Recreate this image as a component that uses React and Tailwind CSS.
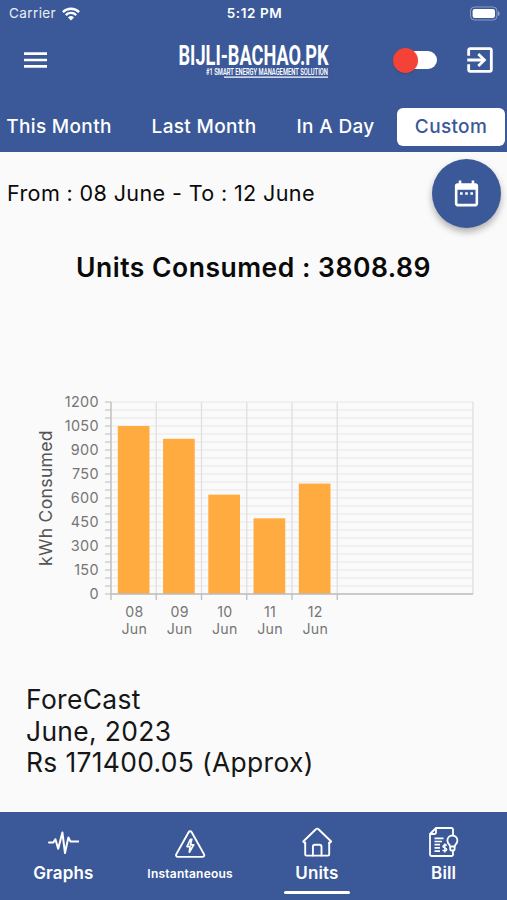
import { useState } from 'react';

const tabs = [
  { label: 'This Month', style: 'w-[118px]' },
  { label: 'Last Month', style: 'w-[172px]' },
  { label: 'In A Day', style: 'w-[91px]' },
  { label: 'Custom', style: 'ml-4 w-[108px]' },
];

const units = [
  { day: '08', value: 1050 },
  { day: '09', value: 970 },
  { day: '10', value: 621 },
  { day: '11', value: 473 },
  { day: '12', value: 690 },
];

function WifiIcon() {
  return (
    <svg className="w-[18px] h-[14px]" viewBox="0 0 18 14" fill="none" stroke="white" strokeWidth="2.3">
      <path d="M0.9 5.1a11.5 11.5 0 0 1 16.2 0" />
      <path d="M3.8 8.1a7.4 7.4 0 0 1 10.4 0" />
      <path d="M6 10.4a4.3 4.3 0 0 1 6 0L9 13.5z" fill="white" stroke="none" />
    </svg>
  );
}

function BatteryIcon() {
  return (
    <svg className="w-[31px] h-[15px]" viewBox="0 0 31 15">
      <rect x="1.5" y="1" width="26.5" height="13" rx="4" fill="none" stroke="white" strokeOpacity="0.4" />
      <rect x="3.6" y="3" width="22.4" height="9" rx="2.2" fill="white" />
      <path d="M29 5.2c2.2.7 2.2 4 0 4.7z" fill="white" fillOpacity="0.45" />
    </svg>
  );
}

function MenuIcon() {
  return (
    <svg className="w-[23px] h-[16px]" viewBox="0 0 23 16" fill="white">
      <path d="M0 .3h23v2.600H0zM0 6.700h23v2.600H0zM0 13.100h23v2.600H0z" />
    </svg>
  );
}

function Logo() {
  return (
    <svg className="w-[152px] h-[44px] overflow-visible" viewBox="0 -5 152 44" fill="white" fontFamily="Roboto, sans-serif" fontWeight="700">
      <text x="0.5" y="22" fontSize="28.5" textLength="150" lengthAdjust="spacingAndGlyphs">BIJLI-BACHAO.PK</text>
      <text x="28" y="32" fontSize="8.2" fontWeight="600" textLength="122" lengthAdjust="spacingAndGlyphs">#1 SMART ENERGY MANAGEMENT SOLUTION</text>
      <path d="M46 33.6h104v1.2h-104z" />
    </svg>
  );
}

function ExitIcon() {
  return (
    <svg className="w-[34px] h-[34px]" viewBox="0 0 24 24" fill="white">
      <path d="M10.09 15.59L11.5 17l5-5-5-5-1.41 1.41L12.67 11H3v2h9.67l-2.58 2.59zM19 3H5c-1.11 0-2 .9-2 2v4h2V5h14v14H5v-4H3v4c0 1.1.89 2 2 2h14c1.1 0 2-.9 2-2V5c0-1.1-.9-2-2-2z" />
    </svg>
  );
}

function CalendarIcon() {
  return (
    <svg className="w-[31px] h-[31px]" viewBox="0 0 24 24" fill="white">
      <path d="M9 11H7v2h2v-2zm4 0h-2v2h2v-2zm4 0h-2v2h2v-2zm2-7h-1V2h-2v2H8V2H6v2H5c-1.11 0-1.99.9-1.99 2L3 20c0 1.1.89 2 2 2h14c1.1 0 2-.9 2-2V6c0-1.1-.9-2-2-2zm0 16H5V9h14v11z" />
    </svg>
  );
}

function GraphsIcon() {
  return (
    <svg className="w-8 h-8" viewBox="0 0 32 32" fill="none" stroke="white" strokeWidth="2" strokeLinecap="round" strokeLinejoin="round">
      <path d="M2 16.6h4.200l2.200-3.400 2.800 9.500 4.200-16.200 2.600 20.500 3.400-15.600 2 4h8" />
    </svg>
  );
}

function InstantIcon() {
  return (
    <svg className="w-8 h-8" viewBox="0 0 32 32" fill="none" stroke="white" strokeWidth="1.9" strokeLinejoin="round">
      <path d="M14.6 6.2a1.8 1.8 0 0 1 3.1 0l12.4 22.2a1.7 1.7 0 0 1-1.5 2.5H3.7a1.7 1.7 0 0 1-1.5-2.5z" />
      <path d="M16.4 13.4l-3.4 7.2h3l-.6 5.6 4.3-7.4h-3.2l1.3-5.4z" strokeWidth="1.7" />
    </svg>
  );
}

function UnitsIcon() {
  return (
    <svg className="w-8 h-8" viewBox="0 0 32 32" fill="none" stroke="white" strokeWidth="1.9" strokeLinejoin="round" strokeLinecap="round">
      <path d="M4.2 16.4v12a1.2 1.2 0 0 0 1.2 1.2h21.6a1.2 1.2 0 0 0 1.2-1.2V16.4" />
      <path d="M4.2 17.2l-2-1.7L14.9 3.2a1.8 1.8 0 0 1 2.6 0l12.7 12.3-2 1.7" />
      <path d="M11.9 29.5v-8.7c0-1.4.7-2.1 2.1-2.1h4.4c1.4 0 2.1.7 2.1 2.1v8.7" />
    </svg>
  );
}

function BillIcon() {
  return (
    <svg className="w-8 h-8" viewBox="0 0 32 32" fill="none" stroke="white" strokeWidth="1.8" strokeLinejoin="round">
      <path d="M25 9V3.5a1.5 1.5 0 0 0-1.5-1.5H8L2 8v20.5A1.5 1.5 0 0 0 3.5 30h20a1.5 1.5 0 0 0 1.5-1.5V25" />
      <path d="M8 2v4.5A1.5 1.5 0 0 1 6.5 8H2" />
      <path d="M6.5 12.3h9M6.5 15.5h7.5M6.5 18.7h5.5M6.5 21.9h5.5M6.5 25.1h5.5" strokeWidth="1.7" />
      <path d="M22 20.5c0-2.2-2.6-2.8-2.6-6a5 5 0 0 1 10 0c0 3.2-2.6 3.8-2.6 6z" />
      <path d="M22.2 21v2.2c0 .8.6 1.3 1.3 1.3h1.8c.8 0 1.3-.5 1.3-1.3V21" />
      <path d="M18.8 19.6c-1-1.2-3.8-1-3.8.8s3.700 1.2 3.700 3-2.900 2-4 .7M16.800 17.5v9" strokeWidth="1.5" />
    </svg>
  );
}

const navItems = [
  { label: 'Graphs', Icon: GraphsIcon, style: 'text-[17px] tracking-[0.15px]' },
  { label: 'Instantaneous', Icon: InstantIcon, style: 'text-[12px] tracking-[0.22px]' },
  { label: 'Units', Icon: UnitsIcon, style: 'text-[17px] tracking-[0.15px]' },
  { label: 'Bill', Icon: BillIcon, style: 'text-[17px] tracking-[0.15px]' },
];

function UnitsChart() {
  const left = 111;
  const right = 473;
  const top = 12;
  const bottom = 204;
  const step = 45.25;
  const y = (value) => bottom - (value * (bottom - top)) / 1200;
  const lines = Array.from({ length: 25 }, (_, i) => i * 50);

  return (
    <svg className="block w-full h-[265px]" viewBox="0 0 507 265" fontFamily="Inter, sans-serif">
      {lines.map((v) => (
        <g key={v}>
          <path d={`M${left} ${y(v)}H${right}`} stroke="#e7e7e7" strokeWidth="1.2" />
          <path d={`M105 ${y(v)}H${left}`} stroke="#c6c6c6" strokeWidth="1.2" />
        </g>
      ))}
      {[1, 2, 3, 4, 5, 8].map((i) => (
        <path key={i} d={`M${left + i * step} ${top}V${bottom}`} stroke="#dddddd" strokeWidth="1.2" />
      ))}
      {units.map((u, i) => (
        <g key={u.day}>
          <rect x={left + i * step + 6.8} y={y(u.value)} width="31.7" height={bottom - y(u.value)} fill="#ffab40" />
          <text x={left + (i + 0.5) * step + 0.7} y="227.2" fontSize="14.2" letterSpacing="0.3" fill="#757575" textAnchor="middle">{u.day}</text>
          <text x={left + (i + 0.5) * step + 0.7} y="244.4" fontSize="14.2" letterSpacing="0.3" fill="#757575" textAnchor="middle">Jun</text>
        </g>
      ))}
      <path d={`M${left} ${top}V${bottom}H${right}`} fill="none" stroke="#bdbdbd" strokeWidth="1.4" />
      {[0, 1, 2, 3, 4, 5].map((i) => (
        <path key={i} d={`M${left + i * step} ${bottom}v6`} stroke="#bdbdbd" strokeWidth="1.3" />
      ))}
      {[0, 150, 300, 450, 600, 750, 900, 1050, 1200].map((v) => (
        <text key={v} x="98.8" y={y(v) + 5.1} fontSize="14.4" letterSpacing="0.3" fill="#757575" textAnchor="end">{v}</text>
      ))}
      <text transform="translate(52 108) rotate(-90)" fontSize="17.6" letterSpacing="0.3" fill="#555555" textAnchor="middle">kWh Consumed</text>
    </svg>
  );
}

export default function App() {
  const [tab, setTab] = useState('Custom');
  const [page, setPage] = useState('Units');

  return (
    <div className="flex flex-col w-[507px] h-[900px] overflow-hidden bg-[#fafafa] font-[Inter,sans-serif]">
      <header className="flex flex-col h-[152px] bg-[#3b5998] text-white">
        <div className="grid grid-cols-3 items-center h-[27px] pl-[9px] pr-[7px] text-[13.5px] leading-none">
          <div className="flex items-center gap-[6px] tracking-[0.4px] text-white/90">
            Carrier
            <WifiIcon />
          </div>
          <div className="text-center font-semibold text-[13.5px] tracking-[0.6px]">5:12 PM</div>
          <div className="flex justify-end"><BatteryIcon /></div>
        </div>

        <div className="flex items-center h-[66px] pl-6 pr-[10px]">
          <button aria-label="Menu"><MenuIcon /></button>
          <div className="ml-[131px]"><Logo /></div>
          <div className="flex items-center ml-[63px] w-[46px] h-[26px]">
            <span className="z-10 w-[25px] h-[25px] rounded-full bg-[#f44336] shadow" />
            <span className="-ml-4 w-[35px] h-[18px] rounded-full bg-white" />
          </div>
          <button className="ml-auto" aria-label="Exit"><ExitIcon /></button>
        </div>

        <nav className="flex items-center flex-1 pt-[9px]">
          {tabs.map((t) => (
            <button
              key={t.label}
              onClick={() => setTab(t.label)}
              className={`h-[38px] rounded-md text-[19px] font-medium tracking-[0.34px] whitespace-nowrap ${t.style} ${tab === t.label ? 'bg-white text-[#3b5998]' : ''}`}
            >
              {t.label}
            </button>
          ))}
        </nav>
      </header>

      <main className="flex-1">
        <div className="flex items-start justify-between h-[83px] pl-[7px] pr-[6px] pt-[7px]">
          <p className="mt-[18px] text-[21.6px] leading-8 tracking-[0.35px] text-[#0a0a0a]">From : 08 June - To : 12 June</p>
          <button className="flex items-center justify-center w-[69px] h-[69px] rounded-full bg-[#3b5998] shadow-[0_4px_7px_rgba(0,0,0,0.3)]" aria-label="Pick dates">
            <CalendarIcon />
          </button>
        </div>
        <h1 className="h-[155px] pt-4 text-center text-[26.5px] leading-8 font-semibold tracking-[0.5px] text-[#0a0a0a]">Units Consumed : 3808.89</h1>
        <UnitsChart />
        <div className="pl-[26px] pt-[29px] text-[26.4px] leading-[31.7px] tracking-[0.35px] text-[#161616]">
          <p>ForeCast</p>
          <p>June, 2023</p>
          <p>Rs 171400.05 (Approx)</p>
        </div>
      </main>

      <footer className="grid grid-cols-4 h-[88px] bg-[#3b5998] text-white">
        {navItems.map(({ label, Icon, style }) => (
          <button key={label} onClick={() => setPage(label)} className="flex flex-col items-center pt-[14px]">
            <Icon />
            <span className={`flex items-center h-[30px] pt-px font-semibold ${style}`}>{label}</span>
            {page === label && <span className="mt-[3px] w-[66px] h-[2.5px] rounded-full bg-white" />}
          </button>
        ))}
      </footer>
    </div>
  );
}
